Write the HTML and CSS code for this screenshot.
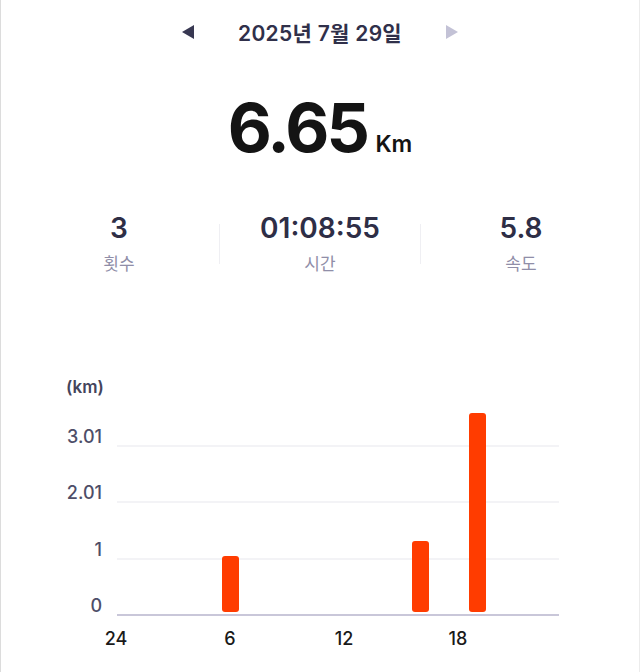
FILE: index.html
```html
<!DOCTYPE html>
<html lang="ko">
<head>
  <meta charset="UTF-8">
  <title>일별 기록</title>
  <link rel="stylesheet" href="styles.css">
</head>
<body>
  <div class="screen">
    <div class="date-nav">
      <span class="arrow arrow-left"></span>
      <span class="date">2025년 7월 29일</span>
      <span class="arrow arrow-right disabled"></span>
    </div>

    <div class="distance">
      <span class="distance-value">6.65</span>
      <span class="distance-unit">Km</span>
    </div>

    <div class="stats">
      <div class="stat">
        <div class="stat-value">3</div>
        <div class="stat-label">횟수</div>
      </div>
      <div class="divider"></div>
      <div class="stat">
        <div class="stat-value">01:08:55</div>
        <div class="stat-label">시간</div>
      </div>
      <div class="divider"></div>
      <div class="stat">
        <div class="stat-value">5.8</div>
        <div class="stat-label">속도</div>
      </div>
    </div>

    <div class="chart">
      <div class="chart-unit">(km)</div>
      <div class="chart-body">
        <div class="tick tick-first">
          <span class="tick-label">3.01</span>
          <span class="tick-line"></span>
        </div>
        <div class="tick">
          <span class="tick-label">2.01</span>
          <span class="tick-line"></span>
        </div>
        <div class="tick tick-tall">
          <span class="tick-label">1</span>
          <span class="tick-line"></span>
        </div>
        <div class="tick">
          <span class="tick-label">0</span>
          <span class="tick-line axis"></span>
        </div>
        <!-- 시간대별 막대 -->
        <div class="bars">
          <div class="bar" style="left: 104.5px; height: 56.5px;"></div>
          <div class="bar" style="left: 294.5px; height: 71.5px;"></div>
          <div class="bar" style="left: 351.5px; height: 199px;"></div>
        </div>
      </div>
      <div class="x-axis">
        <span class="x-label">24</span>
        <span class="x-label">6</span>
        <span class="x-label">12</span>
        <span class="x-label">18</span>
      </div>
    </div>
  </div>
</body>
</html>
```

FILE: styles.css
```css
body {
  margin: 0;
  font-family: 'Inter', 'Noto Sans CJK KR', sans-serif;
  background-color: #FFFFFF;
}

.screen {
  box-sizing: border-box;
  width: 640px;
  min-height: 672px;
  border-left: 1px solid #DCDCDC;
  border-right: 1px solid #ECECEC;
}

.date-nav {
  display: flex;
  align-items: center;
  justify-content: center;
  gap: 44px;
  height: 64px;
}

.date {
  font-size: 21px;
  font-weight: 600;
  color: #30304A;
  letter-spacing: 0.3px;
}

.arrow {
  width: 0;
  height: 0;
  border-top: 7px solid transparent;
  border-bottom: 7px solid transparent;
}

.arrow-left {
  border-right: 12px solid #383852;
}

.arrow-right {
  border-left: 12px solid #383852;
}

.arrow.disabled {
  border-left-color: #C3C2D6;
}

.distance {
  display: flex;
  align-items: baseline;
  justify-content: center;
  gap: 8px;
  margin-top: 29px;
  line-height: 1;
}

.distance-value {
  font-size: 68px;
  font-weight: 700;
  color: #141414;
  letter-spacing: -2.7px;
}

.distance-unit {
  font-size: 23px;
  font-weight: 600;
  color: #141414;
}

.stats {
  display: grid;
  grid-template-columns: 1fr 1px 1fr 1px 1fr;
  align-items: center;
  padding: 0 18px;
  margin-top: 53px;
}

.stat {
  display: flex;
  flex-direction: column;
  align-items: center;
}

.stat-value {
  font-size: 28px;
  font-weight: 600;
  line-height: 1;
  color: #2E2E46;
}

.stat-label {
  margin-top: 12px;
  font-size: 17px;
  line-height: 20px;
  color: #908EA8;
}

.divider {
  height: 40px;
  background-color: #EFEFF3;
}

.chart {
  width: 493px;
  margin-top: 103px;
  margin-left: 65px;
}

.chart-unit {
  font-size: 17px;
  font-weight: 600;
  line-height: 20px;
  color: #44445C;
}

.chart-body {
  position: relative;
}

.tick {
  display: flex;
  align-items: flex-end;
  gap: 15px;
  height: 56px;
}

.tick-first {
  height: 50px;
}

.tick-tall {
  height: 57px;
}

.tick-label {
  width: 36px;
  margin-bottom: 1px;
  font-size: 18px;
  font-weight: 500;
  line-height: 18px;
  text-align: right;
  color: #4E4E68;
}

.tick-line {
  flex: 1;
  height: 2px;
  background-color: #F3F3F6;
}

.tick-line.axis {
  background-color: #C9C7D9;
}

.bars {
  position: absolute;
  left: 51px;
  right: 0;
  top: 0;
  bottom: 4px;
}

.bar {
  position: absolute;
  bottom: 0;
  width: 17px;
  border-radius: 3px;
  background-color: #FF3C00;
}

.x-axis {
  display: flex;
  margin-top: 14px;
  margin-left: -7px;
}

.x-label {
  width: 114px;
  font-size: 18px;
  font-weight: 500;
  line-height: 18px;
  text-align: center;
  color: #1A1A1A;
}
```
